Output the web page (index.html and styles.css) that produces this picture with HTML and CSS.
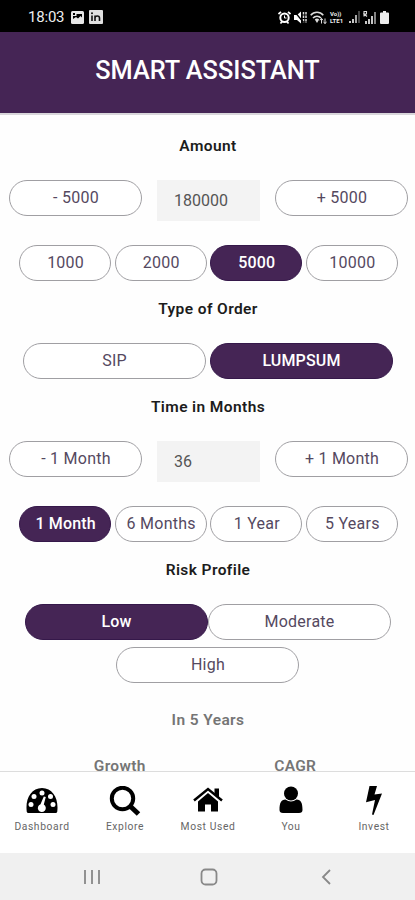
FILE: index.html
```html
<!DOCTYPE html>
<html lang="en">

<head>
    <meta charset="UTF-8">
    <meta name="viewport" content="width=device-width, initial-scale=1.0">
    <title>Smart Assistant</title>
    <link rel="stylesheet" href="styles.css">
</head>

<body>
    <div class="status-bar">
        <div class="status-left">
            <span class="clock">18:03</span>
            <svg width="13" height="13" viewBox="0 0 13 13">
                <rect width="13" height="13" rx="1.5" fill="#e8e8e8"/>
                <path d="M2 10.5V8l3-2 2 1.5L9.500 5 11 6.500V3H5.500v2H2z" fill="#000"/>
                <rect x="2" y="2" width="2" height="2" fill="#000"/>
            </svg>
            <svg width="14" height="14" viewBox="0 0 14 14">
                <rect width="14" height="14" rx="1" fill="#e0e0e0"/>
                <path d="M3 5.500V11M6 5.500V11M6 8c0-2.500 4.500-3 4.500 0v3" fill="none" stroke="#111" stroke-width="1.6"/>
                <circle cx="3" cy="3.300" r="1" fill="#111"/>
            </svg>
        </div>
        <div class="status-right">
            <svg width="13" height="13" viewBox="0 0 13 13">
                <path d="M.5 3 3 .8M12.500 3 10 .8M2.500 12.500l1.500-2M10.500 12.500l-1.500-2" stroke="#fff" stroke-width="1.700"/>
                <circle cx="6.500" cy="6.700" r="4.200" fill="none" stroke="#fff" stroke-width="2"/>
                <path d="M6.500 4.500v2.500h2" fill="none" stroke="#fff"/>
            </svg>
            <svg width="13" height="13" viewBox="0 0 13 13">
                <path d="M0 4h3l4-3.500v12L3 9H0z" fill="#fff"/>
                <path d="M9.500 1v11M12 1v11" stroke="#ddd" stroke-width="1.500" stroke-dasharray="2.500 1"/>
                <path d="M.5.500l9 11" stroke="#000" stroke-width="1.200"/>
            </svg>
            <svg width="17" height="13" viewBox="0 0 17 13">
                <path d="M.7 4.200c3.400-4 9.200-4 12.600 0M3 7c2.200-2.500 5.800-2.500 8 0" fill="none" stroke="#ddd" stroke-width="1.500"/>
                <path d="M4.800 8.500c1.300-1.300 3-1.300 4.400 0L7 12z" fill="#ddd"/>
                <path d="M11.500 12.500v-5M10 9.300l1.500-2L13 9.300M15 7.500v5M13.500 10.700l1.500 2 1.500-2" fill="none" stroke="#ddd" stroke-width="1"/>
            </svg>
            <span class="lte"><span>Vo))</span><span>LTE1</span></span>
            <svg width="11" height="12" viewBox="0 0 11 12">
                <path d="M1 12v-2M4 12V8" stroke="#ddd" stroke-width="1.800"/>
                <path d="M7 12V4" stroke="#bbb" stroke-width="1.800"/>
                <path d="M10 12V0" stroke="#555" stroke-width="1.600"/>
            </svg>
            <svg width="13" height="13" viewBox="0 0 13 13">
                <path d="M1 5.500V.5h2.500v2.500H1l3 2.500" fill="none" stroke="#ddd" stroke-width="1.100"/>
                <path d="M3 13v-3M6 13V8M9 13V5" stroke="#ddd" stroke-width="1.800"/>
                <path d="M12 13V1" stroke="#bbb" stroke-width="1.400"/>
            </svg>
            <svg class="battery" width="9" height="13" viewBox="0 0 9 13">
                <path d="M3 0h3v1.500h2q1 0 1 1V12q0 1-1 1H1q-1 0-1-1V2.500q0-1 1-1h2z" fill="#eee"/>
            </svg>
        </div>
    </div>

    <header class="header">SMART ASSISTANT</header>

    <main class="content">
        <h2 class="label">Amount</h2>
        <div class="stepper">
            <button class="pill">- 5000</button>
            <div class="field">180000</div>
            <button class="pill">+ 5000</button>
        </div>
        <div class="choices four">
            <button class="pill">1000</button>
            <button class="pill">2000</button>
            <button class="pill active">5000</button>
            <button class="pill">10000</button>
        </div>

        <h2 class="label">Type of Order</h2>
        <div class="choices two">
            <button class="pill">SIP</button>
            <button class="pill active">LUMPSUM</button>
        </div>

        <h2 class="label">Time in Months</h2>
        <div class="stepper">
            <button class="pill">- 1 Month</button>
            <div class="field">36</div>
            <button class="pill">+ 1 Month</button>
        </div>
        <div class="choices four">
            <button class="pill active">1 Month</button>
            <button class="pill">6 Months</button>
            <button class="pill">1 Year</button>
            <button class="pill">5 Years</button>
        </div>

        <h2 class="label">Risk Profile</h2>
        <div class="choices risk">
            <button class="pill active">Low</button>
            <button class="pill">Moderate</button>
            <button class="pill">High</button>
        </div>

        <h2 class="label result-title">In 5 Years</h2>
        <div class="results">
            <div>Growth</div>
            <div>CAGR</div>
        </div>
    </main>

    <nav class="tabs">
        <a class="tab">
            <svg width="32" height="30" viewBox="0 0 32 30">
                <path d="M.8 26C-1 13 5 2 16 2s17 11 15.200 24q-.4 1-1.500 1H2.300q-1.100 0-1.500-1z"/>
                <g fill="#fff">
                    <circle cx="16" cy="7" r="2.500"/>
                    <circle cx="8" cy="10.500" r="2.500"/>
                    <circle cx="24.500" cy="10.500" r="2.500"/>
                    <circle cx="5" cy="18.500" r="2.500"/>
                    <circle cx="27" cy="18.500" r="2.500"/>
                    <path d="M17.800 10.500l2 .6-2 7.400a4 4 0 1 1-3.300-.3z"/>
                </g>
            </svg>
            <span>Dashboard</span>
        </a>
        <a class="tab">
            <svg width="32" height="30" viewBox="0 0 32 30">
                <circle cx="13.500" cy="12.500" r="10.700" fill="none" stroke="#000" stroke-width="4"/>
                <path d="M21 20l8.500 8" stroke="#000" stroke-width="5"/>
            </svg>
            <span>Explore</span>
        </a>
        <a class="tab">
            <svg width="32" height="30" viewBox="0 0 32 30">
                <path d="M2 14.500L16 3l14 11.500" fill="none" stroke="#000" stroke-width="2.500"/>
                <path d="M22.500 2.500H27V12l-4.500-4z"/>
                <path d="M6 15.500l10-8.500 10 8.500V25.500h-7v-7h-6v7H6z"/>
            </svg>
            <span>Most Used</span>
        </a>
        <a class="tab">
            <svg width="32" height="30" viewBox="0 0 32 30">
                <circle cx="16" cy="7.500" r="7"/>
                <path d="M4.500 24c0-7 1.500-10.500 6-10.500 3.500 2.500 7.500 2.500 11 0 4.500 0 6 3.500 6 10.500q0 3-3.500 3H8q-3.500 0-3.500-3z"/>
            </svg>
            <span>You</span>
        </a>
        <a class="tab">
            <svg width="32" height="30" viewBox="0 0 32 30">
                <path d="M11.500 0H19l-2.500 8.500 7.500-1L15.500 29l-1.500-.4L17 14l-9 2.200z"/>
            </svg>
            <span>Invest</span>
        </a>
    </nav>

    <div class="system-nav">
        <svg width="18" height="18" viewBox="0 0 18 18">
            <path d="M2 2v14M9 2v14M16 2v14"/>
        </svg>
        <svg width="18" height="18" viewBox="0 0 18 18">
            <rect x="1.500" y="1.500" width="15" height="15" rx="4"/>
        </svg>
        <svg width="18" height="18" viewBox="0 0 18 18">
            <path d="M14 2L7 9l7 7"/>
        </svg>
    </div>
</body>

</html>
```
FILE: styles.css
```css
* {
    box-sizing: border-box;
}

body {
    margin: 0px;
    width: 100%;
    height: 100vh;
    overflow: hidden;
    display: flex;
    flex-direction: column;
    background-color: #fefefe;
    font-family: Roboto, "Liberation Sans", sans-serif;
}

svg {
    display: block;
    flex: none;
}

.status-bar {
    flex: none;
    height: 32px;
    padding: 2px 26px 0px 28px;
    display: flex;
    justify-content: space-between;
    align-items: center;
    background-color: #000;
    color: #eee;
}

.status-left,
.status-right {
    display: flex;
    align-items: center;
}

.status-left {
    gap: 5px;
}

.status-right {
    gap: 3px;
}

.clock {
    width: 38px;
    font-size: 15px;
    letter-spacing: -0.2px;
}

.lte {
    width: 16px;
    font-size: 6px;
    line-height: 7px;
    font-weight: bold;
}

.lte span {
    display: block;
}

.battery {
    margin-left: 1px;
}

.header {
    flex: none;
    height: 83px;
    padding-bottom: 5px;
    display: flex;
    justify-content: center;
    align-items: center;
    background-color: #452555;
    border-bottom: 2px solid #d8d6da;
    color: #fff;
    font-size: 25.3px;
    font-weight: 500;
}

.content {
    flex: 1;
    min-height: 0px;
    overflow: hidden;
}

.label {
    height: 65px;
    margin: 0px;
    padding-top: 20px;
    padding-left: 1px;
    font-size: 15.5px;
    line-height: 22px;
    font-weight: 600;
    letter-spacing: 0.4px;
    text-align: center;
    color: #1c1c1c;
}

.pill {
    height: 36px;
    padding: 0px 0px 1px 1px;
    border: 1px solid #a09fa3;
    border-radius: 18px;
    background-color: #fff;
    color: #55495f;
    font-family: inherit;
    font-size: 16px;
    letter-spacing: 0.25px;
}

.pill.active {
    border-color: #35184a;
    background-color: #452555;
    color: #fff;
    font-weight: 500;
    letter-spacing: 0.15px;
}

.stepper {
    height: 65px;
    padding: 0px 7px 0px 9px;
    display: grid;
    grid-template-columns: 133px 103px 133px;
    justify-content: space-between;
    align-items: start;
}

.field {
    height: 41px;
    padding-left: 17px;
    background-color: #f3f3f3;
    color: #555;
    font-size: 16px;
    line-height: 41px;
}

.choices {
    display: grid;
    justify-content: center;
    align-content: start;
}

.four {
    height: 33px;
    grid-template-columns: repeat(4, 92px);
    column-gap: 3.6px;
    padding-left: 2px;
}

.two {
    height: 33px;
    grid-template-columns: repeat(2, 183px);
    column-gap: 4px;
}

.risk {
    height: 85px;
    grid-template-columns: repeat(2, 183px);
    row-gap: 7px;
}

.risk .pill:last-child {
    grid-column: 1 / 3;
    justify-self: center;
    width: 183px;
}

.result-title,
.results {
    color: #757575;
}

.result-title {
    height: 68px;
}

.results {
    padding: 0px 32px;
    display: grid;
    grid-template-columns: repeat(2, 1fr);
    text-align: center;
    font-size: 15.5px;
    font-weight: 600;
    letter-spacing: 0.3px;
}

.tabs {
    flex: none;
    height: 82px;
    padding-top: 14px;
    display: grid;
    grid-template-columns: repeat(5, 1fr);
    border-top: 1px solid #ddd;
    background-color: #fff;
}

.tab {
    display: flex;
    flex-direction: column;
    align-items: center;
    gap: 4px;
    padding-left: 1px;
    color: #666;
    font-size: 10.3px;
    line-height: 13px;
    letter-spacing: 0.6px;
}

.system-nav {
    flex: none;
    height: 47px;
    padding: 0px 81px 0px 83px;
    display: flex;
    justify-content: space-between;
    align-items: center;
    background-color: #f0f0f0;
    fill: none;
    stroke: #888;
    stroke-width: 1.8;
}
```
